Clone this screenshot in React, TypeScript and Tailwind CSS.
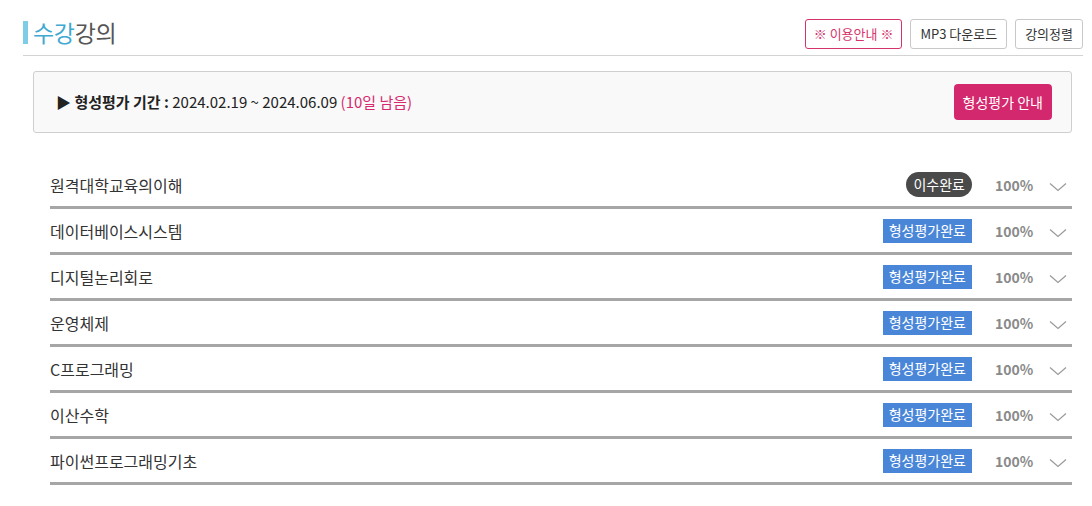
import React from "react";

interface Course {
  name: string;
  status: "done" | "eval";
  progress: number;
}

const courses: Course[] = [
  { name: "원격대학교육의이해", status: "done", progress: 100 },
  { name: "데이터베이스시스템", status: "eval", progress: 100 },
  { name: "디지털논리회로", status: "eval", progress: 100 },
  { name: "운영체제", status: "eval", progress: 100 },
  { name: "C프로그래밍", status: "eval", progress: 100 },
  { name: "이산수학", status: "eval", progress: 100 },
  { name: "파이썬프로그래밍기초", status: "eval", progress: 100 },
];

function Chevron() {
  return (
    <svg width="18" height="10" viewBox="0 0 18 10" fill="none">
      <path d="M1 1.5 L9 8.5 L17 1.5" stroke="#9a9a9a" strokeWidth="1.2" />
    </svg>
  );
}

function CourseRow({ course }: { course: Course }) {
  return (
    <div className="flex h-[46px] items-center border-b-[3px] border-[#a6a6a6]">
      <div className="flex-1 text-[16px] text-[#333]">{course.name}</div>
      {course.status === "done" ? (
        <span className="flex h-[25px] items-center rounded-full bg-[#4a4a4a] px-[7px] text-[14px] text-white">
          이수완료
        </span>
      ) : (
        <span className="flex h-[24px] items-center bg-[#4a86d8] px-[6px] text-[14px] text-white">
          형성평가완료
        </span>
      )}
      <span className="ml-[23px] mt-[2px] w-[38px] text-[14px] font-bold text-[#8a8a8a]">
        {course.progress}%
      </span>
      <span className="ml-[16px] mr-[5px] mt-[5px] flex">
        <Chevron />
      </span>
    </div>
  );
}

export default function App() {
  return (
    <div
      className="h-[506px] w-[1092px] bg-white pl-[23px] pr-[9px] pt-[15px]"
      style={{ fontFamily: '"Noto Sans CJK KR", "Noto Sans", sans-serif' }}
    >
      <div className="flex h-[41px] items-start justify-between border-b border-[#d3d3d3]">
        <h1 className="mt-[6px] flex items-center border-l-[5px] border-[#7fcce6] pl-[5px] text-[23px] leading-[23px] tracking-[-0.3px]">
          <span className="text-[#3fa9d2]">수강</span>
          <span className="text-[#555]">강의</span>
        </h1>
        <div className="mt-[4px] flex gap-[8px] text-[13px]">
          <button className="h-[30px] rounded-[3px] border border-[#d6336c] px-[8px] text-[#d6336c]">
            ※ 이용안내 ※
          </button>
          <button className="h-[30px] rounded-[3px] border border-[#c8c8c8] px-[9px] text-[#333]">
            MP3 다운로드
          </button>
          <button className="h-[30px] rounded-[3px] border border-[#c8c8c8] px-[9px] text-[#333]">
            강의정렬
          </button>
        </div>
      </div>

      <div className="ml-[10px] mr-[11px] mt-[15px] flex h-[62px] items-center justify-between rounded-[3px] border border-[#cfcfcf] bg-[#f9f9f9] pl-[22px] pr-[19px]">
        <p className="text-[15px] text-[#222]">
          <span className="font-bold">▶ 형성평가 기간 : </span>
          2024.02.19 ~ 2024.06.09{" "}
          <span className="text-[#d6296f]">(10일 남음)</span>
        </p>
        <button className="h-[36px] rounded-[4px] bg-[#d4286e] px-[9px] text-[14px] text-white">
          형성평가 안내
        </button>
      </div>

      <div className="ml-[27px] mr-[11px] mt-[30px]">
        {courses.map((c) => (
          <CourseRow key={c.name} course={c} />
        ))}
      </div>
    </div>
  );
}
